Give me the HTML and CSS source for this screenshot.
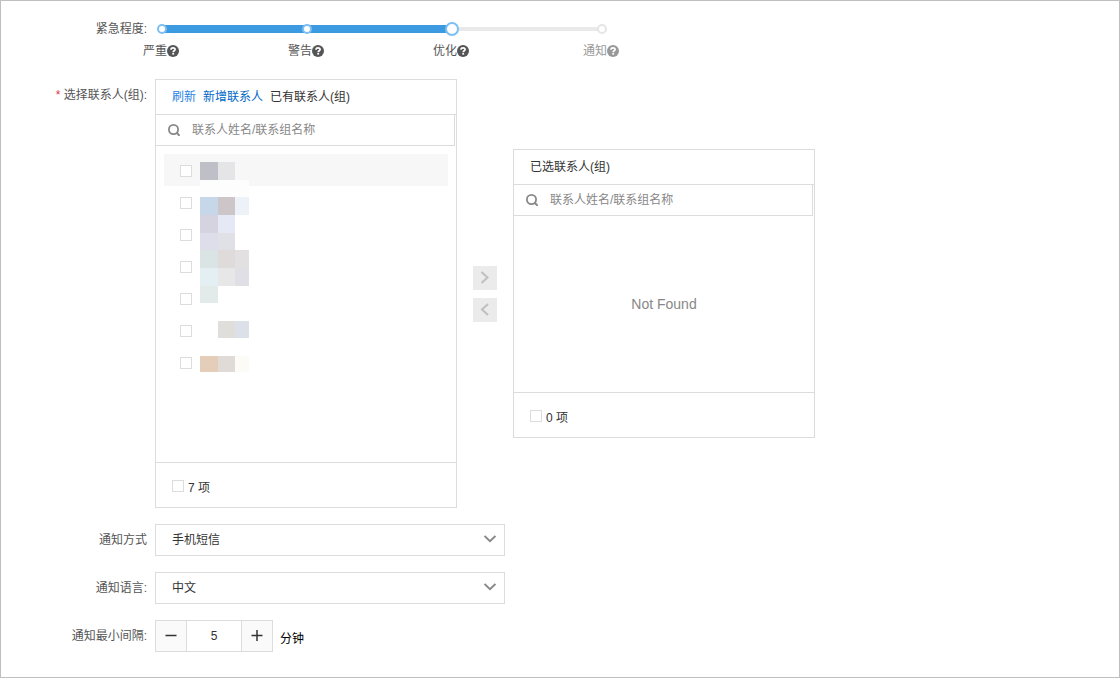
FILE: index.html
```html
<!DOCTYPE html>
<html lang="zh-CN">
<head>
<meta charset="utf-8">
<meta name="viewport" content="width=device-width, initial-scale=1">
<title>通知设置</title>
<link rel="stylesheet" href="styles.css">
</head>
<body>
<svg class="symbols" aria-hidden="true">
  <symbol id="help" viewBox="0 0 12 12">
    <circle cx="6" cy="6" r="6" fill="currentColor"/>
    <path d="M4 4.700C4 3.400 4.900 2.800 6 2.800s2.100.7 2.100 1.700c0 1.300-1.900 1.300-1.900 2.700" fill="none" stroke="#fff" stroke-width="1.700"/>
    <rect x="5.300" y="8" width="1.800" height="1.600" fill="#fff"/>
  </symbol>
  <symbol id="search" viewBox="0 0 12 12">
    <circle cx="5.500" cy="5.500" r="4.600" fill="none" stroke="currentColor" stroke-width="1.800"/>
    <path d="M8.600 8.600l3 3.200" fill="none" stroke="currentColor" stroke-width="2"/>
  </symbol>
  <symbol id="down" viewBox="0 0 12 8">
    <path d="M.6 1l5.400 5.200L11.400 1" fill="none" stroke="currentColor" stroke-width="1.800"/>
  </symbol>
</svg>

<form class="form">
  <div class="row">
    <label class="label" for="level">紧急程度:</label>
    <div class="level">
      <div class="slider">
        <svg class="track" width="454" height="32" viewBox="0 0 454 32" aria-hidden="true">
          <rect x="297" y="14" width="150" height="4" fill="#e9e9e9"/>
          <rect x="7" y="12" width="290" height="8" fill="#3c9be0"/>
          <g fill="#fff" stroke="#7dbff2" stroke-width="2">
            <circle cx="7" cy="16" r="4"/>
            <circle cx="152" cy="16" r="4"/>
          </g>
          <circle cx="447" cy="16" r="4" fill="#fff" stroke="#e5e5e5" stroke-width="2"/>
        </svg>
        <input class="range" id="level" type="range" min="0" max="440" value="290">
      </div>
      <div class="marks">
        <span class="mark">严重<svg class="help"><use href="#help"/></svg></span>
        <span class="mark">警告<svg class="help"><use href="#help"/></svg></span>
        <span class="mark">优化<svg class="help"><use href="#help"/></svg></span>
        <span class="mark mark-off">通知<svg class="help"><use href="#help"/></svg></span>
      </div>
    </div>
  </div>

  <div class="row">
    <div class="label" id="contacts"><span class="required">*</span> 选择联系人(组):</div>
    <div class="transfer" role="group" aria-labelledby="contacts">
      <section class="panel">
        <header class="panel-head">
          <a class="link link-light" href="#">刷新</a>
          <a class="link" href="#">新增联系人</a>
          <span>已有联系人(组)</span>
        </header>
        <div class="search">
          <svg class="search-icon"><use href="#search"/></svg>
          <input class="search-input" type="search" placeholder="联系人姓名/联系组名称" aria-label="搜索已有联系人">
        </div>
        <div class="list-body">
          <ul class="list">
            <li class="item item-hover"><input class="check" type="checkbox" aria-label="联系人 1"></li>
            <li class="item"><input class="check" type="checkbox" aria-label="联系人 2"></li>
            <li class="item"><input class="check" type="checkbox" aria-label="联系人 3"></li>
            <li class="item"><input class="check" type="checkbox" aria-label="联系人 4"></li>
            <li class="item"><input class="check" type="checkbox" aria-label="联系人 5"></li>
            <li class="item"><input class="check" type="checkbox" aria-label="联系人 6"></li>
            <li class="item"><input class="check" type="checkbox" aria-label="联系人 7"></li>
          </ul>
          <svg class="mosaic" width="49" height="210" viewBox="0 0 49 210" shape-rendering="crispEdges" aria-hidden="true">
            <rect x="0" y="0" width="18" height="18" fill="#bfc0c7"/>
            <rect x="18" y="0" width="17" height="18" fill="#e5e5e7"/>
            <rect x="0" y="18" width="49" height="17" fill="#fdfdfd"/>
            <rect x="0" y="35" width="18" height="18" fill="#c7d7ea"/>
            <rect x="18" y="35" width="17" height="18" fill="#cdc6c8"/>
            <rect x="35" y="35" width="14" height="18" fill="#ecf2f7"/>
            <rect x="0" y="53" width="18" height="18" fill="#d4d3df"/>
            <rect x="18" y="53" width="17" height="18" fill="#e4e9f5"/>
            <rect x="0" y="71" width="18" height="17" fill="#dedeeb"/>
            <rect x="18" y="71" width="17" height="17" fill="#e0e0e7"/>
            <rect x="0" y="88" width="18" height="18" fill="#dae4e4"/>
            <rect x="18" y="88" width="17" height="18" fill="#dfdbdb"/>
            <rect x="35" y="88" width="14" height="18" fill="#e2e0e1"/>
            <rect x="0" y="106" width="18" height="18" fill="#e4eff4"/>
            <rect x="18" y="106" width="17" height="18" fill="#e7e7e7"/>
            <rect x="35" y="106" width="14" height="18" fill="#e0dfe5"/>
            <rect x="0" y="124" width="18" height="17" fill="#e3ebea"/>
            <rect x="18" y="159" width="17" height="17" fill="#dfdedb"/>
            <rect x="35" y="159" width="14" height="17" fill="#dce1e9"/>
            <rect x="0" y="194" width="18" height="16" fill="#e4cdb9"/>
            <rect x="18" y="194" width="17" height="16" fill="#e0dbd6"/>
            <rect x="35" y="194" width="14" height="16" fill="#fcfbf5"/>
          </svg>
        </div>
        <footer class="panel-foot">
          <input class="check" type="checkbox" id="all-left">
          <label for="all-left">7 项</label>
        </footer>
      </section>

      <div class="moves">
        <button class="move" type="button" disabled aria-label="添加">
          <svg width="24" height="24" viewBox="0 0 24 24"><path d="M8.500 6l6 5.500-6 5.500" fill="none" stroke="currentColor" stroke-width="2"/></svg>
        </button>
        <button class="move" type="button" disabled aria-label="移除">
          <svg width="24" height="24" viewBox="0 0 24 24"><path d="M15 6l-6 5.500 6 5.500" fill="none" stroke="currentColor" stroke-width="2"/></svg>
        </button>
      </div>

      <section class="panel">
        <header class="panel-head"><span>已选联系人(组)</span></header>
        <div class="search">
          <svg class="search-icon"><use href="#search"/></svg>
          <input class="search-input" type="search" placeholder="联系人姓名/联系组名称" aria-label="搜索已选联系人">
        </div>
        <div class="empty">Not Found</div>
        <footer class="panel-foot">
          <input class="check" type="checkbox" id="all-right">
          <label for="all-right">0 项</label>
        </footer>
      </section>
    </div>
  </div>

  <div class="row">
    <label class="label" for="method">通知方式</label>
    <div class="select">
      <select class="select-box" id="method"><option>手机短信</option></select>
      <svg class="select-arrow"><use href="#down"/></svg>
    </div>
  </div>

  <div class="row">
    <label class="label" for="language">通知语言:</label>
    <div class="select">
      <select class="select-box" id="language"><option>中文</option></select>
      <svg class="select-arrow"><use href="#down"/></svg>
    </div>
  </div>

  <div class="row">
    <label class="label" for="interval">通知最小间隔:</label>
    <div class="interval">
      <div class="stepper">
        <button class="step" type="button" aria-label="减少">
          <svg width="12" height="12" viewBox="0 0 12 12"><path d="M.5 5.500h11" stroke="currentColor" stroke-width="1.500"/></svg>
        </button>
        <input class="step-value" id="interval" type="text" inputmode="numeric" value="5">
        <button class="step" type="button" aria-label="增加">
          <svg width="12" height="12" viewBox="0 0 12 12"><path d="M.5 5.500h11M6 0v11" stroke="currentColor" stroke-width="1.500"/></svg>
        </button>
      </div>
      <span class="unit">分钟</span>
    </div>
  </div>
</form>
</body>
</html>
```
FILE: styles.css
```css
* {
  box-sizing: border-box;
}

body {
  margin: 0;
  min-height: 100vh;
  border: 1px solid #bfbfbf;
  background: #fff;
  color: #333;
  font-family: "Liberation Sans", "Noto Sans CJK SC", sans-serif;
  font-size: 12px;
  line-height: 18px;
}

input,
select,
button {
  margin: 0;
  font: inherit;
  color: inherit;
}

.symbols {
  display: none;
}

.form {
  display: flex;
  flex-direction: column;
  gap: 16px;
  padding: 12px 0 24px;
}

.row {
  display: grid;
  grid-template-columns: 146px minmax(0, 1fr);
  column-gap: 8px;
  align-items: start;
}

.label {
  color: #555;
  line-height: 32px;
  text-align: right;
}

.required {
  color: #e0364c;
}

/* Severity slider */
.slider {
  display: grid;
  width: 454px;
}

.track,
.range {
  grid-area: 1 / 1;
}

.range {
  width: 100%;
  height: 32px;
  appearance: none;
  background: transparent;
}

.range::-webkit-slider-thumb {
  width: 14px;
  height: 14px;
  appearance: none;
  border: 2px solid #7dbff2;
  border-radius: 50%;
  background: #fff;
}

.marks {
  display: grid;
  grid-template-columns: 145px 145px 150px 36px;
  margin: -3px 0 0 -12px;
  padding-bottom: 3px;
}

.mark {
  display: flex;
  align-items: center;
  color: #555;
}

.mark-off {
  color: #999;
}

.help {
  width: 12px;
  height: 12px;
}

/* Contact transfer */
.transfer {
  display: flex;
  align-items: center;
  gap: 16px;
}

.panel {
  width: 302px;
  border: 1px solid #dcdcde;
}

.panel-head {
  display: flex;
  align-items: center;
  gap: 7px;
  height: 35px;
  padding: 0 16px;
  border-bottom: 1px solid #dcdcde;
}

.link {
  color: #0068c9;
  text-decoration: none;
}

.link-light {
  color: #2a84e6;
}

.search {
  display: flex;
  align-items: center;
  gap: 12px;
  height: 31px;
  margin-right: 1px;
  padding: 0 12px;
  border: solid #dcdcde;
  border-width: 0 1px 1px 0;
}

.search-icon {
  flex: none;
  width: 12px;
  height: 12px;
  color: #888;
}

.search-input {
  flex: 1;
  min-width: 0;
  padding: 0;
  border: 0;
  outline: 0;
  appearance: none;
  background: none;
}

.search-input::placeholder {
  color: #888;
}

.list-body {
  position: relative;
  min-height: 316px;
  padding: 8px;
}

.list {
  margin: 0;
  padding: 0;
  list-style: none;
}

.item {
  display: flex;
  align-items: center;
  height: 32px;
  padding: 2px 16px 0;
}

.item-hover {
  background: #f7f7f7;
}

.mosaic {
  position: absolute;
  top: 16px;
  left: 44px;
}

.check {
  width: 12px;
  height: 12px;
  appearance: none;
  border: 1px solid #dcdcde;
  background: #fff;
}

.empty {
  display: grid;
  place-items: center;
  min-height: 176px;
  color: #888;
  font-size: 14px;
}

.panel-foot {
  display: flex;
  align-items: baseline;
  gap: 4px;
  height: 45px;
  padding: 16px 16px 0;
  border-top: 1px solid #dcdcde;
}

.moves {
  display: grid;
  gap: 8px;
}

.move {
  width: 24px;
  height: 24px;
  padding: 0;
  border: 0;
  background: #ebebeb;
  color: #bfbfbf;
}

.move svg {
  display: block;
}

/* Selects */
.select {
  position: relative;
  max-width: 350px;
}

.select-box {
  display: block;
  width: 100%;
  height: 32px;
  padding: 0 32px 0 16px;
  appearance: none;
  border: 1px solid #dcdcde;
  border-radius: 0;
  background: #fff;
}

.select-arrow {
  position: absolute;
  top: 11px;
  right: 9px;
  width: 12px;
  height: 8px;
  color: #888;
  pointer-events: none;
}

/* Interval */
.interval {
  display: flex;
  align-items: center;
  gap: 7px;
}

.stepper {
  display: flex;
  height: 32px;
  border: 1px solid #dcdcde;
}

.step {
  display: grid;
  place-items: center;
  width: 30px;
  padding: 0;
  border: 0;
  background: #fafafa;
}

.step-value {
  width: 56px;
  padding: 0;
  border: solid #dcdcde;
  border-width: 0 1px;
  text-align: center;
}

.unit {
  padding-top: 6px;
  color: #000;
}
```
